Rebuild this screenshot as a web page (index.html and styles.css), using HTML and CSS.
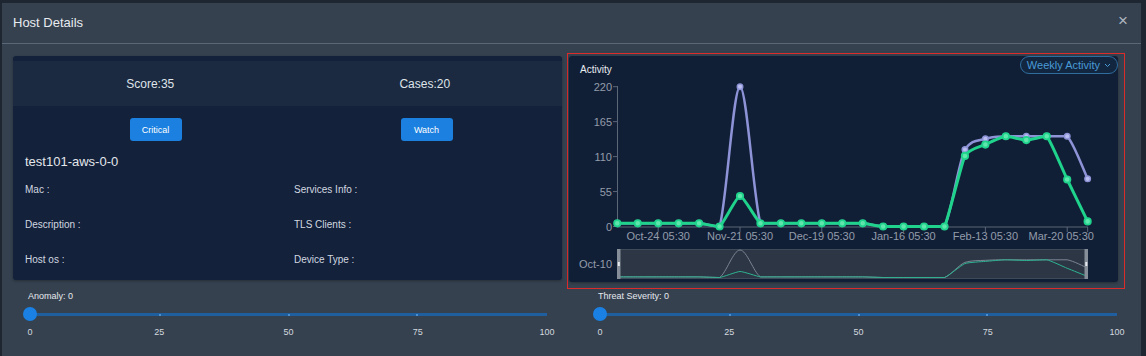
FILE: index.html
```html
<!DOCTYPE html>
<html lang="en">
<head>
  <meta charset="UTF-8">
  <title>Host Details</title>
  <link rel="stylesheet" href="styles.css">
</head>
<body>
  <div class="modal">
    <div class="modal-header">
      <h1>Host Details</h1>
      <span class="close">&times;</span>
    </div>
    <div class="modal-body">
      <div class="top-row">
        <div class="host-card">
          <div class="card-head">
            <div>Score:35</div>
            <div>Cases:20</div>
          </div>
          <div class="badges">
            <div><button>Critical</button></div>
            <div><button>Watch</button></div>
          </div>
          <div class="hostname">test101-aws-0-0</div>
          <div class="fields">
            <div>Mac :</div>
            <div>Services Info :</div>
            <div>Description :</div>
            <div>TLS Clients :</div>
            <div>Host os :</div>
            <div>Device Type :</div>
          </div>
        </div>
        <div class="chart-box">
          <div class="chart-card">
            <div class="chart-head">
              <span class="chart-title">Activity</span>
              <span class="pill">Weekly Activity
                <svg width="7" height="5" viewBox="0 0 7 5"><path d="M1 1l2.5 2.5L6 1" fill="none" stroke="#4a9ad6" stroke-width="1"/></svg>
              </span>
            </div>
            <svg id="chart" width="549" height="204" viewBox="0 0 549 204"></svg>
          </div>
        </div>
      </div>
      <div class="sliders">
        <div class="slider">
          <div class="slider-label">Anomaly: 0</div>
          <div class="track"><span></span><span class="dot"></span><span class="dot"></span><span class="dot"></span><span></span><i class="thumb"></i></div>
          <div class="marks"><span>0</span><span>25</span><span>50</span><span>75</span><span>100</span></div>
        </div>
        <div class="slider right">
          <div class="slider-label">Threat Severity: 0</div>
          <div class="track"><span></span><span class="dot"></span><span class="dot"></span><span class="dot"></span><span></span><i class="thumb"></i></div>
          <div class="marks"><span>0</span><span>25</span><span>50</span><span>75</span><span>100</span></div>
        </div>
      </div>
    </div>
  </div>
  <script>
    const NS = 'http://www.w3.org/2000/svg';
    const svg = document.getElementById('chart');
    const green  = [5,5,5,5,5,0,48,5,5,5,5,5,5,0,0,0,0,111,129,142,136,142,74,8];
    const purple = [5,5,5,5,5,0,220,5,5,5,5,5,5,0,0,0,0,121,138,142,142,142,142,75];
    const xs = i => 48.3 + 20.45 * i;
    const ys = v => 148.5 - v * 139.8 / 220;
    const ms = v => 199.5 - v * 27.5 / 220;

    function add(tag, attrs, text) {
      const el = document.createElementNS(NS, tag);
      for (const k in attrs) el.setAttribute(k, attrs[k]);
      if (text) el.textContent = text;
      svg.appendChild(el);
      return el;
    }

    function smooth(pts, k) {
      let d = 'M' + pts[0][0] + ',' + pts[0][1];
      for (let i = 0; i < pts.length - 1; i++) {
        const p0 = pts[i - 1] || pts[i], p1 = pts[i], p2 = pts[i + 1], p3 = pts[i + 2] || p2;
        const lo = Math.min(p1[1], p2[1]), hi = Math.max(p1[1], p2[1]);
        const c1x = p1[0] + (p2[0] - p0[0]) * k / 6;
        const c1y = Math.min(hi, Math.max(lo, p1[1] + (p2[1] - p0[1]) * k / 6));
        const c2x = p2[0] - (p3[0] - p1[0]) * k / 6;
        const c2y = Math.min(hi, Math.max(lo, p2[1] - (p3[1] - p1[1]) * k / 6));
        d += ' C' + c1x.toFixed(1) + ',' + c1y.toFixed(1) + ' ' + c2x.toFixed(1) + ',' + c2y.toFixed(1) + ' ' + p2[0].toFixed(1) + ',' + p2[1].toFixed(1);
      }
      return d;
    }

    // y axis
    add('line', {x1: 48.5, y1: 8, x2: 48.5, y2: 149, stroke: '#5b6677'});
    [0, 55, 110, 165, 220].forEach(v => {
      const y = ys(v);
      add('line', {x1: 44, y1: y, x2: 48.5, y2: y, stroke: '#5b6677'});
      add('text', {x: 43, y: y + 4, 'text-anchor': 'end', class: 'axis'}, String(v));
    });
    // x axis
    add('line', {x1: 48, y1: 149, x2: 519, y2: 149, stroke: '#5b6677'});
    const labels = [[2, 'Oct-24 05:30'], [6, 'Nov-21 05:30'], [10, 'Dec-19 05:30'], [14, 'Jan-16 05:30'], [18, 'Feb-13 05:30'], [22, 'Mar-20 05:30']];
    labels.forEach(([i, t]) => {
      const x = xs(i);
      add('line', {x1: x, y1: 149, x2: x, y2: 154, stroke: '#5b6677'});
      add('text', {x: i === 22 ? x - 6 : x, y: 162, 'text-anchor': 'middle', class: 'axis'}, t);
    });
    add('line', {x1: xs(23), y1: 149, x2: xs(23), y2: 154, stroke: '#5b6677'});

    // series
    add('path', {d: smooth(purple.map((v, i) => [xs(i), ys(v)]), 1), fill: 'none', stroke: '#8d93d6', 'stroke-width': 2.5});
    purple.forEach((v, i) => add('circle', {cx: xs(i), cy: ys(v), r: 2.8, fill: '#b9bdef', stroke: '#8d93d6', 'stroke-width': 1.4}));
    add('path', {d: smooth(green.map((v, i) => [xs(i), ys(v)]), 0.5), fill: 'none', stroke: '#1fd38c', 'stroke-width': 3});
    green.forEach((v, i) => add('circle', {cx: xs(i), cy: ys(v), r: 3.2, fill: '#5fe6ad', stroke: '#1fd38c', 'stroke-width': 1.8}));

    // data zoom
    add('rect', {x: 48.5, y: 171.5, width: 470, height: 29, fill: '#2c3645', stroke: '#3f4a59'});
    add('path', {d: smooth(purple.map((v, i) => [xs(i), ms(v)]), 1), fill: 'none', stroke: '#7c8594', 'stroke-width': 1});
    add('path', {d: smooth(green.map((v, i) => [xs(i), ms(v)]), 0.5), fill: 'none', stroke: '#2eb391', 'stroke-width': 1});
    add('rect', {x: 48, y: 171, width: 3.5, height: 30, fill: '#858e99'});
    add('rect', {x: 515.5, y: 171, width: 3.5, height: 30, fill: '#858e99'});
    add('rect', {x: 48.8, y: 184, width: 2, height: 4, fill: '#e6e9ee'});
    add('rect', {x: 516.3, y: 184, width: 2, height: 4, fill: '#e6e9ee'});
    add('text', {x: 43, y: 190, 'text-anchor': 'end', class: 'axis'}, 'Oct-10');
  </script>
</body>
</html>
```

FILE: styles.css
```css
body { margin: 0; background: #1e2731; font-family: "Liberation Sans", Arial, sans-serif; }
.modal { margin: 3px 0 0 2px; width: 1139px; height: 353px; background: #35414f; }
.modal-header { height: 40px; display: flex; align-items: center; justify-content: space-between; padding: 0 13px 0 11px; border-bottom: 1px solid #5a6777; }
.modal-header h1 { margin: 0; font-size: 13px; font-weight: normal; color: #e8ebef; padding-bottom: 2px; }
.close { color: #aeb6c0; font-size: 17px; line-height: 1; padding-bottom: 6px; }
.modal-body { padding: 9px 0 0 11px; }
.top-row { display: flex; gap: 5px; }

.host-card { width: 549px; height: 224px; margin-top: 3px; padding-top: 5px; box-sizing: border-box; background: #13213a; border-radius: 3px; box-shadow: 0 1px 3px rgba(0,0,0,0.3); }
.card-head { display: grid; grid-template-columns: 1fr 1fr; height: 45px; background: #1b2a40; }
.card-head div { display: flex; align-items: center; justify-content: center; font-size: 12px; color: #dfe3ea; }
.badges { display: grid; grid-template-columns: 1fr 1fr; margin-top: 12px; padding-left: 7px; }
.badges div { display: flex; justify-content: center; }
.badges button { width: 52px; height: 23px; border: none; border-radius: 3px; background: #1b80df; color: #fff; font-family: inherit; font-size: 9px; padding: 0; }
.hostname { margin-top: 13px; padding-left: 12px; font-size: 13px; line-height: 15px; color: #e3e7ec; }
.fields { display: grid; grid-template-columns: 269px 1fr; grid-auto-rows: 35px; margin-top: 3px; padding-left: 12px; }
.fields div { display: flex; align-items: center; font-size: 10px; color: #d2d8e0; }

.chart-box { width: 558px; height: 236px; box-sizing: border-box; border: 1px solid #dc2b2b; padding: 2px 7px 6px 1px; }
.chart-card { width: 549px; height: 226px; background: #111f36; border-radius: 3px; box-shadow: 0 1px 3px rgba(0,0,0,0.3); }
.chart-head { height: 22px; display: flex; justify-content: space-between; align-items: flex-start; padding: 0 0 0 11px; }
.chart-title { font-size: 10px; line-height: 12px; color: #e9ecf0; margin-top: 8px; }
.pill { display: flex; align-items: center; gap: 4px; height: 16px; padding: 0 6px 0 6px; border: 1px solid #2f6d9f; border-radius: 9px; background: #12263f; font-size: 11px; color: #4a9ad6; }
#chart { display: block; }
#chart .axis { font-size: 11px; fill: #939cab; font-family: "Liberation Sans", Arial, sans-serif; }

.sliders { display: flex; padding-top: 2px; }
.slider { width: 517px; margin-left: 17px; }
.slider.right { margin-left: 53px; }
.slider-label { margin-left: -2px; font-size: 9px; line-height: 11px; color: #e6e9ee; }
.track { position: relative; display: flex; justify-content: space-between; align-items: center; height: 3px; margin-top: 11px; background: #1f5fa0; }
.track span { width: 2px; height: 2px; }
.track .dot { background: #4a8fd0; }
.thumb { position: absolute; left: -7px; top: -6px; width: 14px; height: 14px; border-radius: 50%; background: #1a80e3; }
.marks { display: flex; justify-content: space-between; margin-top: 11px; }
.marks span { width: 0; display: flex; justify-content: center; font-size: 9px; line-height: 10px; color: #d3d8df; }
```
